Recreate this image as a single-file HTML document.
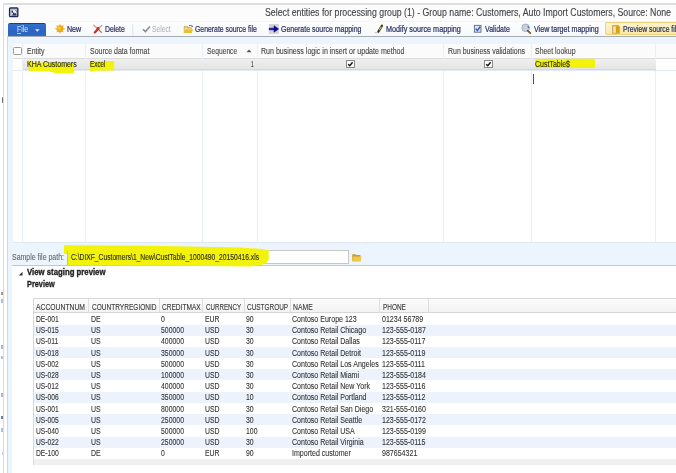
<!DOCTYPE html>
<html><head><meta charset="utf-8"><style>
html,body{margin:0;padding:0;width:676px;height:473px;overflow:hidden;background:#fff;position:relative;font-family:"Liberation Sans", sans-serif;}
.a{position:absolute;box-sizing:border-box;}
.t{position:absolute;white-space:pre;line-height:1;transform-origin:0 0;font-family:"Liberation Sans", sans-serif;-webkit-text-stroke:0.12px currentColor;}

</style></head><body>
<!-- outer frame -->
<div class="a" style="left:0;top:0;width:676px;height:473px;background:#fff"></div>
<div class="a" style="left:3px;top:3px;width:673px;height:2px;background:#dedede"></div>
<div class="a" style="left:3px;top:3px;width:1px;height:470px;background:#dcdcdc"></div>
<!-- title area -->
<div class="a" style="left:4px;top:5px;width:672px;height:17px;background:#fcfcfc"></div>
<!-- window icon -->
<svg class="a" style="left:8px;top:6px" width="12" height="12">
<rect x="1.6" y="2" width="8.2" height="8.6" rx="0.8" fill="#f6f8fc" stroke="#1c2858" stroke-width="1.4"/>
<path d="M3 3.6 h5.6 v5.8 h-5.6z" fill="none" stroke="#7a84a8" stroke-width="0.6"/>
<rect x="3.6" y="4.6" width="1.3" height="2.2" fill="#1c2858"/>
<path d="M4 9.4 L5.6 6 L6.6 7.6 L7.4 6.8 L8.8 9.4Z" fill="#2a3868"/>
<path d="M7.4 4.2 L8.6 5.8" stroke="#2a3868" stroke-width="0.7"/>
</svg>
<!-- toolbar -->
<div class="a" style="left:4px;top:21px;width:672px;height:15px;background:linear-gradient(#eef0f2,#fdfdfe 8%,#f6f9fc)"></div>
<div class="a" style="left:7.6px;top:35.5px;width:669px;height:1px;background:#a8abb0"></div>
<!-- file button -->
<div class="a" style="left:7.7px;top:22.6px;width:38.5px;height:13.6px;background:linear-gradient(#3070cc,#2a64c0 60%,#2d68c4);border-top:1px solid #1a3f80;border-radius:2px 2px 0 0"></div>
<div class="a" style="left:16.8px;top:32.6px;width:4px;height:0.8px;background:#c0d0ea"></div>
<!-- left inner line -->
<div class="a" style="left:6.8px;top:36px;width:1px;height:437px;background:#d4d6d8"></div>
<!-- main light blue panel -->
<div class="a" style="left:8px;top:36.5px;width:668px;height:229px;background:#ecf4fd"></div>
<div class="a" style="left:8px;top:265px;width:4.2px;height:208px;background:#ecf4fd"></div>
<!-- entities grid -->
<div class="a" style="left:12.5px;top:43.5px;width:664px;height:198.5px;background:#fff"></div>
<div class="a" style="left:12.5px;top:43.5px;width:664px;height:15.3px;background:#fbfbfb;border-bottom:1px solid #dcdcdc"></div>
<!-- column separators -->
<div class="a" style="left:22px;top:43.5px;width:1px;height:198.5px;background:#e9eff7"></div>
<div class="a" style="left:85px;top:43.5px;width:1px;height:198.5px;background:#e9eff7"></div>
<div class="a" style="left:201.5px;top:43.5px;width:1px;height:198.5px;background:#e9eff7"></div>
<div class="a" style="left:257px;top:43.5px;width:1px;height:198.5px;background:#e9eff7"></div>
<div class="a" style="left:443px;top:43.5px;width:1px;height:198.5px;background:#e9eff7"></div>
<div class="a" style="left:531.2px;top:43.5px;width:1px;height:198.5px;background:#e9eff7"></div>
<div class="a" style="left:655px;top:43.5px;width:1px;height:198.5px;background:#e9eff7"></div>
<!-- row 1 -->
<div class="a" style="left:22.5px;top:58.8px;width:633px;height:11.4px;background:linear-gradient(#efefef,#e5e5e5);border-bottom:1px solid #d8d8d8"></div>
<div class="a" style="left:12.5px;top:70.3px;width:664px;height:1px;background:#e3ebf4"></div>
<!-- header checkbox -->
<div class="a" style="left:13.4px;top:46.9px;width:8.2px;height:8px;border:1px solid #9a9a9a;border-radius:1.5px;background:#fff"></div>
<!-- sort arrow -->
<svg class="a" style="left:246px;top:49px" width="6" height="4"><path d="M0.5 3.3 L3 0.5 L5.5 3.3Z" fill="#555"/></svg>
<!-- row checkboxes -->
<div class="a" style="left:346.3px;top:60.1px;width:8.4px;height:7.8px;border:1px solid #8a8a8a;background:#fff"></div>
<svg class="a" style="left:346.3px;top:60.1px" width="9" height="8"><path d="M2.2 4.2 L3.8 5.8 L6.6 2.2" stroke="#111" stroke-width="1.4" fill="none"/></svg>
<div class="a" style="left:484.2px;top:60.1px;width:8.4px;height:7.8px;border:1px solid #8a8a8a;background:#fff"></div>
<svg class="a" style="left:484.2px;top:60.1px" width="9" height="8"><path d="M2.2 4.2 L3.8 5.8 L6.6 2.2" stroke="#111" stroke-width="1.4" fill="none"/></svg>
<!-- cursor -->
<div class="a" style="left:532.9px;top:73.8px;width:1.1px;height:10.2px;background:#505050"></div>
<!-- grid bottom -->
<div class="a" style="left:12.5px;top:241.5px;width:664px;height:1px;background:#dfe7f0"></div>
<!-- input box -->
<div class="a" style="left:67.4px;top:250.2px;width:282px;height:14.2px;background:#fff;border:1px solid #c8c8c8"></div>
<!-- section separator -->
<div class="a" style="left:12.2px;top:265px;width:664px;height:208px;background:#fff"></div>
<div class="a" style="left:12.2px;top:265px;width:664px;height:1px;background:#c8c8c8"></div>
<!-- triangle -->
<svg class="a" style="left:18px;top:270.5px" width="6" height="6"><path d="M4.5 0.8 L4.5 4.5 L0.8 4.5Z" fill="#333"/></svg>
<!-- preview grid -->
<div class="a" style="left:32.8px;top:298px;width:644px;height:166.5px;background:#fff;border:1px solid #d8d8d8;border-right:none"></div>
<div class="a" style="left:33.8px;top:299px;width:643px;height:14px;background:linear-gradient(#fcfcfc,#f2f2f2);border-bottom:1px solid #d6d6d6"></div>
<div class="a" style="left:33.8px;top:459px;width:643px;height:5.5px;background:#f0f0f0"></div>
<!-- preview header separators -->
<div class="a" style="left:88.3px;top:299px;width:1px;height:14px;background:#dedede"></div>
<div class="a" style="left:158.6px;top:299px;width:1px;height:14px;background:#dedede"></div>
<div class="a" style="left:202.1px;top:299px;width:1px;height:14px;background:#dedede"></div>
<div class="a" style="left:244px;top:299px;width:1px;height:14px;background:#dedede"></div>
<div class="a" style="left:290px;top:299px;width:1px;height:14px;background:#dedede"></div>
<div class="a" style="left:379px;top:299px;width:1px;height:14px;background:#dedede"></div>
<div class="a" style="left:427.5px;top:299px;width:1px;height:14px;background:#dedede"></div>
<!-- yellow highlights -->
<svg class="a" style="left:0;top:0;filter:blur(0.35px)" width="676" height="473">
<path fill="#f2f20a" d="M28.2 60.6 L31.5 60.8 L33 62.6 L60 62.4 L72.5 63.2 L74.2 64.5 L74.2 72.5 L72.5 73.5 L57 73.4 L49 71.2 L30 71 L28.5 70 Z"/>
<path fill="#f2f20a" d="M89.6 61 L114.2 61 L114.2 70.6 L95 70.8 L93.5 71.6 L89.8 71.6 Z"/>
<path fill="#f2f20a" d="M535.3 59 L594 58.8 L595 60 L595 67 L594 67.9 L536 67.9 L535.3 67 Z"/>
<path fill="#f2f20a" d="M64 245.2 L150 245.8 L240 247.6 L262 249 L268.6 250 L268.8 259 L267 262.5 L262 264.8 L250 266.4 L160 265.5 L67.6 265 L67.6 254 L64 254 Z"/>
</svg>
<div class="a" style="left:67.4px;top:250.5px;width:1px;height:14px;background:#b8b8a0;opacity:0.8"></div>
<!-- toolbar icons -->
<svg class="a" style="left:0;top:0" width="676" height="40">
<!-- file dropdown arrow -->
<path d="M35 29.2 L39.6 29.2 L37.3 31.8 Z" fill="#e8f0fb"/>
<!-- sun -->
<g transform="translate(60,28.8) scale(1.12)" fill="#f0a81e">
<circle r="2.9"/>
<path d="M0 -4.8 L1 -2 L-1 -2Z M0 4.8 L1 2 L-1 2Z M-4.8 0 L-2 1 L-2 -1Z M4.8 0 L2 1 L2 -1Z M3.4 -3.4 L2.2 -0.8 L0.8 -2.2Z M-3.4 3.4 L-2.2 0.8 L-0.8 2.2Z M-3.4 -3.4 L-0.8 -2.2 L-2.2 -0.8Z M3.4 3.4 L0.8 2.2 L2.2 0.8Z"/>
<circle r="1.3" cx="-0.8" cy="-0.6" fill="#f8d820"/>
</g>
<!-- delete X -->
<path d="M93.8 25.4 L97.8 28.8" stroke="#d8a888" stroke-width="1.5" stroke-linecap="round"/>
<path d="M97.8 28.8 L101.4 32.4" stroke="#a87860" stroke-width="1.3" stroke-linecap="round"/>
<path d="M101.8 25.4 L98.2 28.6" stroke="#d0a080" stroke-width="1.4" stroke-linecap="round"/>
<path d="M98.6 28.2 L94.8 32.4" stroke="#d42a1c" stroke-width="2.2" stroke-linecap="round"/>
<circle cx="97.8" cy="28.4" r="1.2" fill="#d42a1c"/>
<!-- separator -->
<rect x="132.3" y="24" width="1" height="11.5" fill="#dde2ea"/>
<!-- select check -->
<path d="M143 29.2 L145.4 31.6 L150 26.4" stroke="#8a8a8a" stroke-width="1.5" fill="none"/>
<!-- folder -->
<path d="M183.8 26.2 L187.2 26.2 L188.2 27.2 L191.5 27.2 L191.5 33 L183.8 33 Z" fill="#c8a040"/>
<path d="M184.4 27.2 L187 27.2 L187.8 28.2 L191 28.2 L191 32.5 L184.4 32.5Z" fill="#f2dc7a"/>
<path d="M185 29.5 L193.2 29.5 L191.6 33 L184.2 33Z" fill="#e8c030"/>
<path d="M189 25.6 Q191 24.8 192.4 26.4" stroke="#4a70b0" stroke-width="1" fill="none"/>
<path d="M192.8 25.6 L192.6 27.2 L191.4 26.8Z" fill="#30508a"/>
<!-- arrow icon -->
<rect x="268.9" y="24" width="10" height="9.9" fill="#d4d4d6"/>
<path d="M269.2 28.2 L274 28.2 L274 25.8 L278.6 29 L274 32.2 L274 29.8 L269.2 29.8Z" fill="#0a0a90" stroke="#0a0a90" stroke-width="0.6" stroke-linejoin="round"/>
<!-- pencil -->
<path d="M374.5 32.6 L378.5 32.6" stroke="#c8c8c8" stroke-width="1.2"/>
<path d="M378.4 31.6 L382 25.6" stroke="#2a2a20" stroke-width="2.2" stroke-linecap="round"/>
<path d="M379.2 30.2 L381.4 26.6" stroke="#c8c820" stroke-width="1.2"/>
<path d="M381.6 25.4 L382.2 25.8" stroke="#7a4a2a" stroke-width="1.6"/>
<!-- validate checkbox -->
<rect x="474.4" y="25.4" width="6.6" height="6.8" fill="#dde6f2" stroke="#6a7488" stroke-width="1"/>
<path d="M475.8 28.6 L477.3 30.6 L480.2 26.8" stroke="#2a5ad0" stroke-width="1.5" fill="none"/>
<!-- magnifier -->
<circle cx="525.6" cy="27.8" r="3.8" fill="#c8d2de" stroke="#9aa4b0" stroke-width="0.8"/>
<path d="M527.5 26.6 A1.6 1.6 0 0 1 529 28.2" stroke="#3a7ad8" stroke-width="1.2" fill="none"/>
<path d="M527.6 30.6 L530.4 33.2" stroke="#7a5030" stroke-width="1.6" stroke-linecap="round"/>
</svg>
<!-- preview button -->
<div class="a" style="left:605px;top:22.2px;width:71px;height:13.3px;background:linear-gradient(#fdf4d0,#fbe9a8);border:1px solid #efd27a;border-right:none;border-radius:2px 0 0 2px"></div>
<svg class="a" style="left:611px;top:23.5px" width="10" height="11">
<path d="M1.5 1.5 L7.5 1.5 L8.4 2.5 L8.4 9.3 L1.5 9.3 Z" fill="#e8a818" stroke="#b8a078" stroke-width="0.8"/>
<rect x="2.2" y="2.3" width="2.6" height="6.5" fill="#f6e8a8"/>
<path d="M5.2 3.6 h2 M5.2 5.4 h2 M5.2 7.2 h2" stroke="#c88810" stroke-width="0.7"/>
</svg>
<!-- sample path folder -->
<svg class="a" style="left:351px;top:252px" width="12" height="11">
<path d="M1.2 2.2 L4.4 2.2 L5.2 3 L9.4 3 L9.4 9.2 L1.2 9.2Z" fill="#c89a30"/>
<path d="M1.6 4.6 L10.6 4.6 L9.4 9.2 L1.2 9.2Z" fill="#f0c848"/>
</svg>
<!-- left edge marks -->
<div class="a" style="left:1.8px;top:97px;width:1.4px;height:6px;background:#6a6e76;border-radius:0.5px"></div>
<div class="a" style="left:1.4px;top:291.8px;width:1.4px;height:3px;background:#a89888"></div>
<div class="a" style="left:1.4px;top:299px;width:1.2px;height:4px;background:#b0c0dc"></div>
<div class="a" style="left:1.4px;top:344.5px;width:1.4px;height:4px;background:#a8b8d8"></div>
<div class="a" style="left:1.4px;top:356px;width:1.2px;height:2.5px;background:#b0c0dc"></div>
<div class="a" style="left:1.4px;top:392.5px;width:1.4px;height:4px;background:#a8b8d8"></div>
<div class="a" style="left:1.4px;top:416px;width:1.4px;height:2.6px;background:#7080a8"></div>
<div class="a" style="left:1.4px;top:427.5px;width:1.4px;height:4px;background:#b0c0dc"></div>
<div class="a" style="left:1.6px;top:451.5px;width:1px;height:3px;background:#c0cce4"></div>

<div class="a" style="left:33.8px;top:324.50px;width:643px;height:11.2px;background:#edf3fc"></div>
<div class="a" style="left:33.8px;top:346.90px;width:643px;height:11.2px;background:#edf3fc"></div>
<div class="a" style="left:33.8px;top:369.30px;width:643px;height:11.2px;background:#edf3fc"></div>
<div class="a" style="left:33.8px;top:391.70px;width:643px;height:11.2px;background:#edf3fc"></div>
<div class="a" style="left:33.8px;top:414.10px;width:643px;height:11.2px;background:#edf3fc"></div>
<div class="a" style="left:33.8px;top:436.50px;width:643px;height:11.2px;background:#edf3fc"></div>
<span class="t" style="left:264.70px;top:7.93px;font-size:10px;font-weight:400;color:#404448;transform:scaleX(0.8748);">Select entities for processing group (1) - Group name: Customers, Auto Import Customers, Source: None</span>
<span class="t" style="left:16.70px;top:25.10px;font-size:8.5px;font-weight:400;color:#dfe8f6;transform:scaleX(0.8027);-webkit-text-stroke:0;text-decoration:none">File</span>
<span class="t" style="left:66.70px;top:25.10px;font-size:8.5px;font-weight:400;color:#2c3262;transform:scaleX(0.8345);-webkit-text-stroke:0.22px #2c3262">New</span>
<span class="t" style="left:104.60px;top:25.10px;font-size:8.5px;font-weight:400;color:#2c3262;transform:scaleX(0.8015);-webkit-text-stroke:0.22px #2c3262">Delete</span>
<span class="t" style="left:152.40px;top:25.10px;font-size:8.5px;font-weight:400;color:#b4b8c0;transform:scaleX(0.7873);">Select</span>
<span class="t" style="left:195.20px;top:25.10px;font-size:8.5px;font-weight:400;color:#2c3262;transform:scaleX(0.8073);-webkit-text-stroke:0.22px #2c3262">Generate source file</span>
<span class="t" style="left:281.00px;top:25.10px;font-size:8.5px;font-weight:400;color:#2c3262;transform:scaleX(0.8181);-webkit-text-stroke:0.22px #2c3262">Generate source mapping</span>
<span class="t" style="left:385.60px;top:25.10px;font-size:8.5px;font-weight:400;color:#2c3262;transform:scaleX(0.8522);-webkit-text-stroke:0.22px #2c3262">Modify source mapping</span>
<span class="t" style="left:484.60px;top:25.10px;font-size:8.5px;font-weight:400;color:#2c3262;transform:scaleX(0.8241);-webkit-text-stroke:0.22px #2c3262">Validate</span>
<span class="t" style="left:533.50px;top:25.10px;font-size:8.5px;font-weight:400;color:#2c3262;transform:scaleX(0.8378);-webkit-text-stroke:0.22px #2c3262">View target mapping</span>
<span class="t" style="left:623.00px;top:25.10px;font-size:8.5px;font-weight:400;color:#2c3262;transform:scaleX(0.8000);-webkit-text-stroke:0.22px #2c3262">Preview source file</span>
<span class="t" style="left:26.90px;top:47.10px;font-size:8.5px;font-weight:400;color:#474747;transform:scaleX(0.8182);">Entity</span>
<span class="t" style="left:89.50px;top:47.10px;font-size:8.5px;font-weight:400;color:#474747;transform:scaleX(0.8216);">Source data format</span>
<span class="t" style="left:206.60px;top:47.10px;font-size:8.5px;font-weight:400;color:#474747;transform:scaleX(0.7886);">Sequence</span>
<span class="t" style="left:261.20px;top:47.10px;font-size:8.5px;font-weight:400;color:#474747;transform:scaleX(0.8320);">Run business logic in insert or update method</span>
<span class="t" style="left:447.70px;top:47.10px;font-size:8.5px;font-weight:400;color:#474747;transform:scaleX(0.8199);">Run business validations</span>
<span class="t" style="left:535.00px;top:47.10px;font-size:8.5px;font-weight:400;color:#474747;transform:scaleX(0.8161);">Sheet lookup</span>
<span class="t" style="left:26.90px;top:60.10px;font-size:8.5px;font-weight:400;color:#2a2a20;transform:scaleX(0.8219);">KHA Customers</span>
<span class="t" style="left:89.60px;top:60.10px;font-size:8.5px;font-weight:400;color:#2a2a20;transform:scaleX(0.7453);">Excel</span>
<span class="t" style="left:251.20px;top:60.10px;font-size:8.5px;font-weight:400;color:#333;transform:scaleX(0.5492);">1</span>
<span class="t" style="left:535.30px;top:60.10px;font-size:8.5px;font-weight:400;color:#2a2a20;transform:scaleX(0.8229);">CustTable$</span>
<span class="t" style="left:12.00px;top:252.80px;font-size:8.5px;font-weight:400;color:#666;transform:scaleX(0.8211);-webkit-text-stroke:0.1px #666">Sample file path:</span>
<span class="t" style="left:70.60px;top:252.80px;font-size:8.5px;font-weight:400;color:#2a2a20;transform:scaleX(0.7894);">C:\DIXF_Customers\1_New\CustTable_1000490_20150416.xls</span>
<span class="t" style="left:26.50px;top:267.58px;font-size:9px;font-weight:700;color:#222;transform:scaleX(0.8638);-webkit-text-stroke:0.35px #222">View staging preview</span>
<span class="t" style="left:26.60px;top:280.30px;font-size:8.5px;font-weight:700;color:#222;transform:scaleX(0.8649);-webkit-text-stroke:0.3px #222">Preview</span>
<span class="t" style="left:36.30px;top:302.70px;font-size:8.5px;font-weight:400;color:#3a3a3a;transform:scaleX(0.7982);">ACCOUNTNUM</span>
<span class="t" style="left:91.60px;top:302.70px;font-size:8.5px;font-weight:400;color:#3a3a3a;transform:scaleX(0.7699);">COUNTRYREGIONID</span>
<span class="t" style="left:161.70px;top:302.70px;font-size:8.5px;font-weight:400;color:#3a3a3a;transform:scaleX(0.7730);">CREDITMAX</span>
<span class="t" style="left:205.50px;top:302.70px;font-size:8.5px;font-weight:400;color:#3a3a3a;transform:scaleX(0.7286);">CURRENCY</span>
<span class="t" style="left:246.90px;top:302.70px;font-size:8.5px;font-weight:400;color:#3a3a3a;transform:scaleX(0.7567);">CUSTGROUP</span>
<span class="t" style="left:293.00px;top:302.70px;font-size:8.5px;font-weight:400;color:#3a3a3a;transform:scaleX(0.8020);">NAME</span>
<span class="t" style="left:382.80px;top:302.70px;font-size:8.5px;font-weight:400;color:#3a3a3a;transform:scaleX(0.7574);">PHONE</span>
<span class="t" style="left:35.50px;top:315.00px;font-size:8.5px;font-weight:400;color:#333;transform:scaleX(0.7900);-webkit-text-stroke:0.1px #333">DE-001</span>
<span class="t" style="left:90.80px;top:315.00px;font-size:8.5px;font-weight:400;color:#333;transform:scaleX(0.8200);-webkit-text-stroke:0.1px #333">DE</span>
<span class="t" style="left:160.90px;top:315.00px;font-size:8.5px;font-weight:400;color:#333;transform:scaleX(0.8100);-webkit-text-stroke:0.1px #333">0</span>
<span class="t" style="left:204.70px;top:315.00px;font-size:8.5px;font-weight:400;color:#333;transform:scaleX(0.8100);-webkit-text-stroke:0.1px #333">EUR</span>
<span class="t" style="left:246.10px;top:315.00px;font-size:8.5px;font-weight:400;color:#333;transform:scaleX(0.8100);-webkit-text-stroke:0.1px #333">90</span>
<span class="t" style="left:292.20px;top:315.00px;font-size:8.5px;font-weight:400;color:#333;transform:scaleX(0.8300);-webkit-text-stroke:0.1px #333">Contoso Europe 123</span>
<span class="t" style="left:382.00px;top:315.00px;font-size:8.5px;font-weight:400;color:#333;transform:scaleX(0.8300);-webkit-text-stroke:0.1px #333">01234 56789</span>
<span class="t" style="left:35.50px;top:326.20px;font-size:8.5px;font-weight:400;color:#333;transform:scaleX(0.7900);-webkit-text-stroke:0.1px #333">US-015</span>
<span class="t" style="left:90.80px;top:326.20px;font-size:8.5px;font-weight:400;color:#333;transform:scaleX(0.8200);-webkit-text-stroke:0.1px #333">US</span>
<span class="t" style="left:160.90px;top:326.20px;font-size:8.5px;font-weight:400;color:#333;transform:scaleX(0.8100);-webkit-text-stroke:0.1px #333">500000</span>
<span class="t" style="left:204.70px;top:326.20px;font-size:8.5px;font-weight:400;color:#333;transform:scaleX(0.8100);-webkit-text-stroke:0.1px #333">USD</span>
<span class="t" style="left:246.10px;top:326.20px;font-size:8.5px;font-weight:400;color:#333;transform:scaleX(0.8100);-webkit-text-stroke:0.1px #333">30</span>
<span class="t" style="left:292.20px;top:326.20px;font-size:8.5px;font-weight:400;color:#333;transform:scaleX(0.8300);-webkit-text-stroke:0.1px #333">Contoso Retail Chicago</span>
<span class="t" style="left:382.00px;top:326.20px;font-size:8.5px;font-weight:400;color:#333;transform:scaleX(0.8300);-webkit-text-stroke:0.1px #333">123-555-0187</span>
<span class="t" style="left:35.50px;top:337.40px;font-size:8.5px;font-weight:400;color:#333;transform:scaleX(0.7900);-webkit-text-stroke:0.1px #333">US-011</span>
<span class="t" style="left:90.80px;top:337.40px;font-size:8.5px;font-weight:400;color:#333;transform:scaleX(0.8200);-webkit-text-stroke:0.1px #333">US</span>
<span class="t" style="left:160.90px;top:337.40px;font-size:8.5px;font-weight:400;color:#333;transform:scaleX(0.8100);-webkit-text-stroke:0.1px #333">400000</span>
<span class="t" style="left:204.70px;top:337.40px;font-size:8.5px;font-weight:400;color:#333;transform:scaleX(0.8100);-webkit-text-stroke:0.1px #333">USD</span>
<span class="t" style="left:246.10px;top:337.40px;font-size:8.5px;font-weight:400;color:#333;transform:scaleX(0.8100);-webkit-text-stroke:0.1px #333">30</span>
<span class="t" style="left:292.20px;top:337.40px;font-size:8.5px;font-weight:400;color:#333;transform:scaleX(0.8300);-webkit-text-stroke:0.1px #333">Contoso Retail Dallas</span>
<span class="t" style="left:382.00px;top:337.40px;font-size:8.5px;font-weight:400;color:#333;transform:scaleX(0.8300);-webkit-text-stroke:0.1px #333">123-555-0117</span>
<span class="t" style="left:35.50px;top:348.60px;font-size:8.5px;font-weight:400;color:#333;transform:scaleX(0.7900);-webkit-text-stroke:0.1px #333">US-018</span>
<span class="t" style="left:90.80px;top:348.60px;font-size:8.5px;font-weight:400;color:#333;transform:scaleX(0.8200);-webkit-text-stroke:0.1px #333">US</span>
<span class="t" style="left:160.90px;top:348.60px;font-size:8.5px;font-weight:400;color:#333;transform:scaleX(0.8100);-webkit-text-stroke:0.1px #333">350000</span>
<span class="t" style="left:204.70px;top:348.60px;font-size:8.5px;font-weight:400;color:#333;transform:scaleX(0.8100);-webkit-text-stroke:0.1px #333">USD</span>
<span class="t" style="left:246.10px;top:348.60px;font-size:8.5px;font-weight:400;color:#333;transform:scaleX(0.8100);-webkit-text-stroke:0.1px #333">30</span>
<span class="t" style="left:292.20px;top:348.60px;font-size:8.5px;font-weight:400;color:#333;transform:scaleX(0.8300);-webkit-text-stroke:0.1px #333">Contoso Retail Detroit</span>
<span class="t" style="left:382.00px;top:348.60px;font-size:8.5px;font-weight:400;color:#333;transform:scaleX(0.8300);-webkit-text-stroke:0.1px #333">123-555-0119</span>
<span class="t" style="left:35.50px;top:359.80px;font-size:8.5px;font-weight:400;color:#333;transform:scaleX(0.7900);-webkit-text-stroke:0.1px #333">US-002</span>
<span class="t" style="left:90.80px;top:359.80px;font-size:8.5px;font-weight:400;color:#333;transform:scaleX(0.8200);-webkit-text-stroke:0.1px #333">US</span>
<span class="t" style="left:160.90px;top:359.80px;font-size:8.5px;font-weight:400;color:#333;transform:scaleX(0.8100);-webkit-text-stroke:0.1px #333">500000</span>
<span class="t" style="left:204.70px;top:359.80px;font-size:8.5px;font-weight:400;color:#333;transform:scaleX(0.8100);-webkit-text-stroke:0.1px #333">USD</span>
<span class="t" style="left:246.10px;top:359.80px;font-size:8.5px;font-weight:400;color:#333;transform:scaleX(0.8100);-webkit-text-stroke:0.1px #333">30</span>
<span class="t" style="left:292.20px;top:359.80px;font-size:8.5px;font-weight:400;color:#333;transform:scaleX(0.8300);-webkit-text-stroke:0.1px #333">Contoso Retail Los Angeles</span>
<span class="t" style="left:382.00px;top:359.80px;font-size:8.5px;font-weight:400;color:#333;transform:scaleX(0.8300);-webkit-text-stroke:0.1px #333">123-555-0111</span>
<span class="t" style="left:35.50px;top:371.00px;font-size:8.5px;font-weight:400;color:#333;transform:scaleX(0.7900);-webkit-text-stroke:0.1px #333">US-028</span>
<span class="t" style="left:90.80px;top:371.00px;font-size:8.5px;font-weight:400;color:#333;transform:scaleX(0.8200);-webkit-text-stroke:0.1px #333">US</span>
<span class="t" style="left:160.90px;top:371.00px;font-size:8.5px;font-weight:400;color:#333;transform:scaleX(0.8100);-webkit-text-stroke:0.1px #333">100000</span>
<span class="t" style="left:204.70px;top:371.00px;font-size:8.5px;font-weight:400;color:#333;transform:scaleX(0.8100);-webkit-text-stroke:0.1px #333">USD</span>
<span class="t" style="left:246.10px;top:371.00px;font-size:8.5px;font-weight:400;color:#333;transform:scaleX(0.8100);-webkit-text-stroke:0.1px #333">30</span>
<span class="t" style="left:292.20px;top:371.00px;font-size:8.5px;font-weight:400;color:#333;transform:scaleX(0.8300);-webkit-text-stroke:0.1px #333">Contoso Retail Miami</span>
<span class="t" style="left:382.00px;top:371.00px;font-size:8.5px;font-weight:400;color:#333;transform:scaleX(0.8300);-webkit-text-stroke:0.1px #333">123-555-0184</span>
<span class="t" style="left:35.50px;top:382.20px;font-size:8.5px;font-weight:400;color:#333;transform:scaleX(0.7900);-webkit-text-stroke:0.1px #333">US-012</span>
<span class="t" style="left:90.80px;top:382.20px;font-size:8.5px;font-weight:400;color:#333;transform:scaleX(0.8200);-webkit-text-stroke:0.1px #333">US</span>
<span class="t" style="left:160.90px;top:382.20px;font-size:8.5px;font-weight:400;color:#333;transform:scaleX(0.8100);-webkit-text-stroke:0.1px #333">400000</span>
<span class="t" style="left:204.70px;top:382.20px;font-size:8.5px;font-weight:400;color:#333;transform:scaleX(0.8100);-webkit-text-stroke:0.1px #333">USD</span>
<span class="t" style="left:246.10px;top:382.20px;font-size:8.5px;font-weight:400;color:#333;transform:scaleX(0.8100);-webkit-text-stroke:0.1px #333">30</span>
<span class="t" style="left:292.20px;top:382.20px;font-size:8.5px;font-weight:400;color:#333;transform:scaleX(0.8300);-webkit-text-stroke:0.1px #333">Contoso Retail New York</span>
<span class="t" style="left:382.00px;top:382.20px;font-size:8.5px;font-weight:400;color:#333;transform:scaleX(0.8300);-webkit-text-stroke:0.1px #333">123-555-0116</span>
<span class="t" style="left:35.50px;top:393.40px;font-size:8.5px;font-weight:400;color:#333;transform:scaleX(0.7900);-webkit-text-stroke:0.1px #333">US-006</span>
<span class="t" style="left:90.80px;top:393.40px;font-size:8.5px;font-weight:400;color:#333;transform:scaleX(0.8200);-webkit-text-stroke:0.1px #333">US</span>
<span class="t" style="left:160.90px;top:393.40px;font-size:8.5px;font-weight:400;color:#333;transform:scaleX(0.8100);-webkit-text-stroke:0.1px #333">350000</span>
<span class="t" style="left:204.70px;top:393.40px;font-size:8.5px;font-weight:400;color:#333;transform:scaleX(0.8100);-webkit-text-stroke:0.1px #333">USD</span>
<span class="t" style="left:246.10px;top:393.40px;font-size:8.5px;font-weight:400;color:#333;transform:scaleX(0.8100);-webkit-text-stroke:0.1px #333">10</span>
<span class="t" style="left:292.20px;top:393.40px;font-size:8.5px;font-weight:400;color:#333;transform:scaleX(0.8300);-webkit-text-stroke:0.1px #333">Contoso Retail Portland</span>
<span class="t" style="left:382.00px;top:393.40px;font-size:8.5px;font-weight:400;color:#333;transform:scaleX(0.8300);-webkit-text-stroke:0.1px #333">123-555-0112</span>
<span class="t" style="left:35.50px;top:404.60px;font-size:8.5px;font-weight:400;color:#333;transform:scaleX(0.7900);-webkit-text-stroke:0.1px #333">US-001</span>
<span class="t" style="left:90.80px;top:404.60px;font-size:8.5px;font-weight:400;color:#333;transform:scaleX(0.8200);-webkit-text-stroke:0.1px #333">US</span>
<span class="t" style="left:160.90px;top:404.60px;font-size:8.5px;font-weight:400;color:#333;transform:scaleX(0.8100);-webkit-text-stroke:0.1px #333">800000</span>
<span class="t" style="left:204.70px;top:404.60px;font-size:8.5px;font-weight:400;color:#333;transform:scaleX(0.8100);-webkit-text-stroke:0.1px #333">USD</span>
<span class="t" style="left:246.10px;top:404.60px;font-size:8.5px;font-weight:400;color:#333;transform:scaleX(0.8100);-webkit-text-stroke:0.1px #333">30</span>
<span class="t" style="left:292.20px;top:404.60px;font-size:8.5px;font-weight:400;color:#333;transform:scaleX(0.8300);-webkit-text-stroke:0.1px #333">Contoso Retail San Diego</span>
<span class="t" style="left:382.00px;top:404.60px;font-size:8.5px;font-weight:400;color:#333;transform:scaleX(0.8300);-webkit-text-stroke:0.1px #333">321-555-0160</span>
<span class="t" style="left:35.50px;top:415.80px;font-size:8.5px;font-weight:400;color:#333;transform:scaleX(0.7900);-webkit-text-stroke:0.1px #333">US-005</span>
<span class="t" style="left:90.80px;top:415.80px;font-size:8.5px;font-weight:400;color:#333;transform:scaleX(0.8200);-webkit-text-stroke:0.1px #333">US</span>
<span class="t" style="left:160.90px;top:415.80px;font-size:8.5px;font-weight:400;color:#333;transform:scaleX(0.8100);-webkit-text-stroke:0.1px #333">250000</span>
<span class="t" style="left:204.70px;top:415.80px;font-size:8.5px;font-weight:400;color:#333;transform:scaleX(0.8100);-webkit-text-stroke:0.1px #333">USD</span>
<span class="t" style="left:246.10px;top:415.80px;font-size:8.5px;font-weight:400;color:#333;transform:scaleX(0.8100);-webkit-text-stroke:0.1px #333">30</span>
<span class="t" style="left:292.20px;top:415.80px;font-size:8.5px;font-weight:400;color:#333;transform:scaleX(0.8300);-webkit-text-stroke:0.1px #333">Contoso Retail Seattle</span>
<span class="t" style="left:382.00px;top:415.80px;font-size:8.5px;font-weight:400;color:#333;transform:scaleX(0.8300);-webkit-text-stroke:0.1px #333">123-555-0172</span>
<span class="t" style="left:35.50px;top:427.00px;font-size:8.5px;font-weight:400;color:#333;transform:scaleX(0.7900);-webkit-text-stroke:0.1px #333">US-040</span>
<span class="t" style="left:90.80px;top:427.00px;font-size:8.5px;font-weight:400;color:#333;transform:scaleX(0.8200);-webkit-text-stroke:0.1px #333">US</span>
<span class="t" style="left:160.90px;top:427.00px;font-size:8.5px;font-weight:400;color:#333;transform:scaleX(0.8100);-webkit-text-stroke:0.1px #333">500000</span>
<span class="t" style="left:204.70px;top:427.00px;font-size:8.5px;font-weight:400;color:#333;transform:scaleX(0.8100);-webkit-text-stroke:0.1px #333">USD</span>
<span class="t" style="left:246.10px;top:427.00px;font-size:8.5px;font-weight:400;color:#333;transform:scaleX(0.8100);-webkit-text-stroke:0.1px #333">100</span>
<span class="t" style="left:292.20px;top:427.00px;font-size:8.5px;font-weight:400;color:#333;transform:scaleX(0.8300);-webkit-text-stroke:0.1px #333">Contoso Retail USA</span>
<span class="t" style="left:382.00px;top:427.00px;font-size:8.5px;font-weight:400;color:#333;transform:scaleX(0.8300);-webkit-text-stroke:0.1px #333">123-555-0199</span>
<span class="t" style="left:35.50px;top:438.20px;font-size:8.5px;font-weight:400;color:#333;transform:scaleX(0.7900);-webkit-text-stroke:0.1px #333">US-022</span>
<span class="t" style="left:90.80px;top:438.20px;font-size:8.5px;font-weight:400;color:#333;transform:scaleX(0.8200);-webkit-text-stroke:0.1px #333">US</span>
<span class="t" style="left:160.90px;top:438.20px;font-size:8.5px;font-weight:400;color:#333;transform:scaleX(0.8100);-webkit-text-stroke:0.1px #333">250000</span>
<span class="t" style="left:204.70px;top:438.20px;font-size:8.5px;font-weight:400;color:#333;transform:scaleX(0.8100);-webkit-text-stroke:0.1px #333">USD</span>
<span class="t" style="left:246.10px;top:438.20px;font-size:8.5px;font-weight:400;color:#333;transform:scaleX(0.8100);-webkit-text-stroke:0.1px #333">30</span>
<span class="t" style="left:292.20px;top:438.20px;font-size:8.5px;font-weight:400;color:#333;transform:scaleX(0.8300);-webkit-text-stroke:0.1px #333">Contoso Retail Virginia</span>
<span class="t" style="left:382.00px;top:438.20px;font-size:8.5px;font-weight:400;color:#333;transform:scaleX(0.8300);-webkit-text-stroke:0.1px #333">123-555-0115</span>
<span class="t" style="left:35.50px;top:449.40px;font-size:8.5px;font-weight:400;color:#333;transform:scaleX(0.7900);-webkit-text-stroke:0.1px #333">DE-100</span>
<span class="t" style="left:90.80px;top:449.40px;font-size:8.5px;font-weight:400;color:#333;transform:scaleX(0.8200);-webkit-text-stroke:0.1px #333">DE</span>
<span class="t" style="left:160.90px;top:449.40px;font-size:8.5px;font-weight:400;color:#333;transform:scaleX(0.8100);-webkit-text-stroke:0.1px #333">0</span>
<span class="t" style="left:204.70px;top:449.40px;font-size:8.5px;font-weight:400;color:#333;transform:scaleX(0.8100);-webkit-text-stroke:0.1px #333">EUR</span>
<span class="t" style="left:246.10px;top:449.40px;font-size:8.5px;font-weight:400;color:#333;transform:scaleX(0.8100);-webkit-text-stroke:0.1px #333">90</span>
<span class="t" style="left:292.20px;top:449.40px;font-size:8.5px;font-weight:400;color:#333;transform:scaleX(0.8300);-webkit-text-stroke:0.1px #333">Imported customer</span>
<span class="t" style="left:382.00px;top:449.40px;font-size:8.5px;font-weight:400;color:#333;transform:scaleX(0.8300);-webkit-text-stroke:0.1px #333">987654321</span>
</body></html>
